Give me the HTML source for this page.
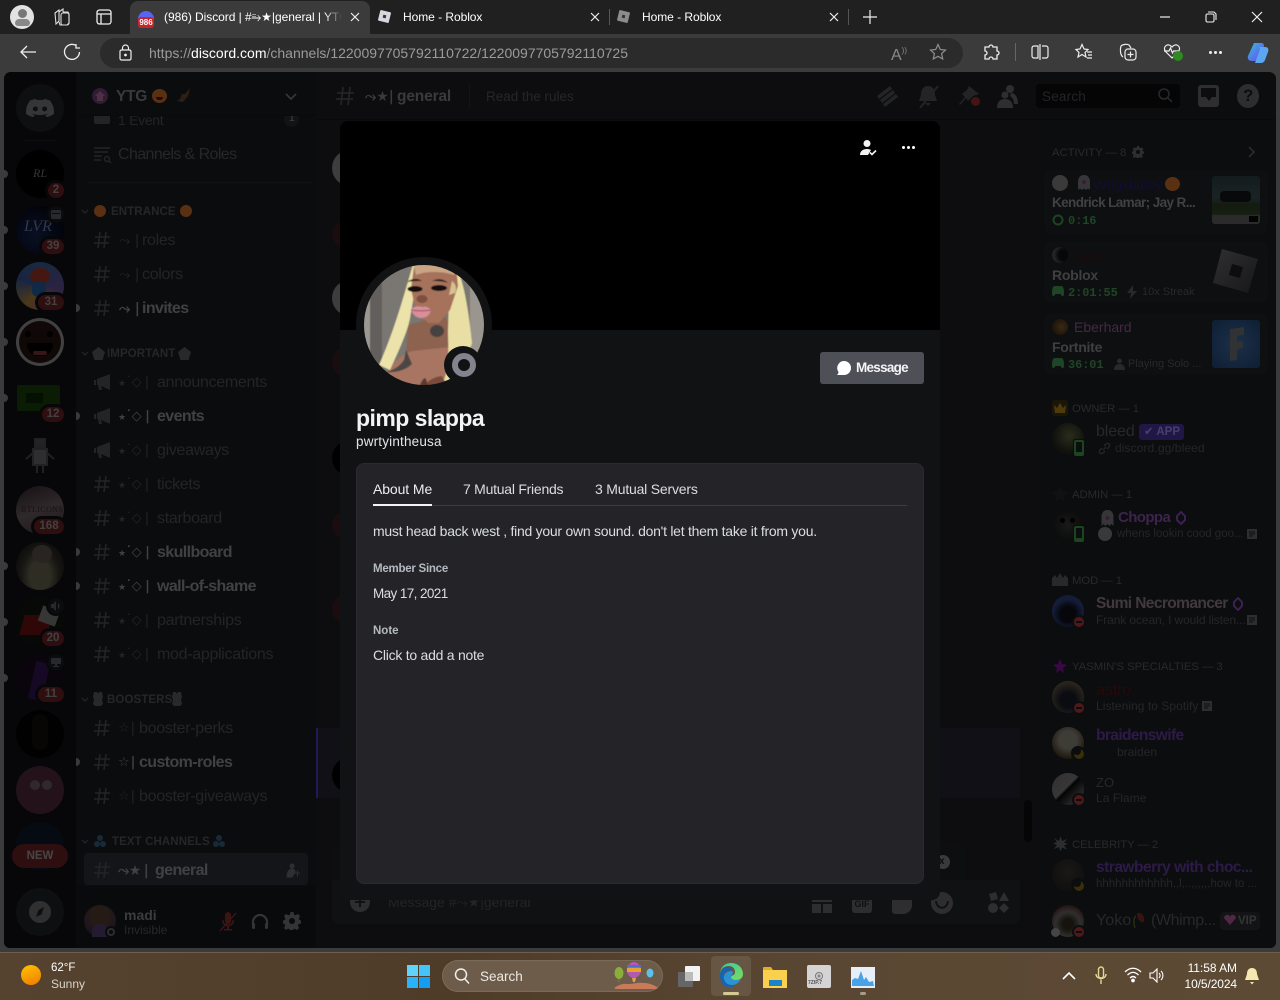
<!DOCTYPE html>
<html><head><meta charset="utf-8"><title>Discord</title>
<style>
html,body{margin:0;padding:0;width:1280px;height:1000px;overflow:hidden;background:#3b3b3b;font-family:"Liberation Sans","DejaVu Sans",sans-serif}
div,span,svg{position:absolute}
span.i{position:static}
.t{white-space:nowrap;line-height:20px;margin-top:-10px;height:20px}
.ch{font-size:16px;color:#37383b;letter-spacing:-.3px;margin-top:-8px}
.u{color:#636467;font-weight:bold;letter-spacing:-.6px}
.pre{font-family:"DejaVu Sans",sans-serif;font-size:13px;color:#37383b;letter-spacing:-.5px;margin-top:-8px}
.cat{font-size:11.5px;font-weight:bold;color:#3a3b3e;letter-spacing:.1px;margin-top:-8px}
.mem{font-size:16px;color:#3d3e41;letter-spacing:-.1px;margin-top:-8px}
.sub{font-size:12px;color:#3a3b3e}
.head{font-size:11.3px;color:#3f4043;letter-spacing:-.02px;margin-top:-8px}
.c{border-radius:50%}
.b{background:#7a2628;color:#a9a9ab;font-size:11.5px;font-weight:bold;border-radius:8px;height:15px;line-height:15px;text-align:center;box-shadow:0 0 0 3px #141418}
.dot{width:4px;height:8px;left:4px;background:#5a5a5c;border-radius:0 4px 4px 0}
.dot2{width:4px;height:8px;left:76px;background:#5a5a5c;border-radius:0 4px 4px 0}
.dnd{width:10px;height:10px;background:#7a2628;border-radius:50%;box-shadow:0 0 0 2px #131417}
.dnd:after{content:"";position:absolute;left:2px;top:4px;width:6px;height:2px;background:#131417}
.tb{color:#fff;font-size:12px}
.mono{font-family:'Liberation Mono',monospace;font-size:12px;font-weight:bold;color:#2e6b3a;letter-spacing:-.1px;margin-top:-9px}
.dim{left:1052px;width:32px;height:32px;border-radius:50%;background:rgba(0,0,0,.3)}
</style></head>
<body>
<!-- browser chrome -->
<div style="left:0;top:0;width:1280px;height:34px;background:#202020"></div>
<div style="left:0;top:34px;width:1280px;height:38px;background:#3b3b3b"></div>
<div style="left:130px;top:1px;width:240px;height:33px;background:#3b3b3b;border-radius:8px 8px 0 0"></div>
<div class="c" style="left:10px;top:5px;width:24px;height:24px;background:#e2e2e2"></div>
<div class="c" style="left:18px;top:9px;width:9px;height:9px;background:#777"></div>
<div style="left:15px;top:19px;width:15px;height:7px;background:#888;border-radius:7px 7px 5px 5px"></div>
<svg style="left:53px;top:8px" width="18" height="18" fill="none" stroke="#ddd" stroke-width="1.1"><path d="M2 5 6 2v11l-3 3zM6 4l4-3 0 3M10 4h5l1 2v9l-2 2H7l-1-3"/><rect x="8" y="5" width="8" height="12" rx="2"/></svg>
<svg style="left:96px;top:9px" width="16" height="16" fill="none" stroke="#eee" stroke-width="1.3"><rect x="1" y="1" width="14" height="14" rx="2.5"/><path d="M1 5h14M5 5v10"/></svg>
<div class="c" style="left:138px;top:11px;width:16px;height:16px;background:#5865f2"></div>
<div style="left:138px;top:17px;width:16px;height:11px;background:#c8242b;border-radius:3px;color:#fff;font-size:8px;font-weight:bold;line-height:12px;text-align:center">986</div>
<div class="t tb" style="left:164px;top:17px;width:178px;overflow:hidden;letter-spacing:-.05px;-webkit-mask-image:linear-gradient(90deg,#000 90%,transparent)">(986) Discord | #⥱★|general | YTG</div>
<svg style="left:350px;top:12px" width="10" height="10" stroke="#eee" stroke-width="1.2"><path d="M1 1l8 8M9 1 1 9"/></svg>
<div style="left:379px;top:11px;width:11px;height:11px;background:#d6d8de;transform:rotate(14deg);border-radius:1px"></div><div style="left:383px;top:15px;width:3px;height:3px;background:#333;transform:rotate(14deg)"></div>
<div class="t tb" style="left:403px;top:17px;letter-spacing:-.05px">Home - Roblox</div>
<svg style="left:590px;top:12px" width="10" height="10" stroke="#eee" stroke-width="1.2"><path d="M1 1l8 8M9 1 1 9"/></svg>
<div style="left:609px;top:9px;width:1px;height:16px;background:#555"></div>
<div style="left:618px;top:11px;width:11px;height:11px;background:#8a8c90;transform:rotate(14deg);border-radius:1px"></div><div style="left:622px;top:15px;width:3px;height:3px;background:#333;transform:rotate(14deg)"></div>
<div class="t tb" style="left:642px;top:17px;letter-spacing:-.05px">Home - Roblox</div>
<svg style="left:829px;top:12px" width="10" height="10" stroke="#eee" stroke-width="1.2"><path d="M1 1l8 8M9 1 1 9"/></svg>
<div style="left:848px;top:9px;width:1px;height:16px;background:#555"></div>
<svg style="left:863px;top:10px" width="14" height="14" stroke="#eee" stroke-width="1.2"><path d="M7 0v14M0 7h14"/></svg>
<svg style="left:1159px;top:12px" width="12" height="10" stroke="#eee" stroke-width="1.2"><path d="M1 5h10"/></svg>
<svg style="left:1205px;top:11px" width="12" height="12" fill="none" stroke="#eee" stroke-width="1.1"><rect x="1" y="3" width="8" height="8" rx="1.5"/><path d="M3 1h6l2 2v6"/></svg>
<svg style="left:1251px;top:11px" width="12" height="12" stroke="#eee" stroke-width="1.2"><path d="M1 1l10 10M11 1 1 11"/></svg>

<div style="left:100px;top:38px;width:863px;height:30px;background:#2b2b2b;border-radius:15px"></div>
<svg style="left:19px;top:44px" width="18" height="16" fill="none" stroke="#eee" stroke-width="1.3"><path d="M17 8H2M8 2 2 8l6 6"/></svg>
<svg style="left:63px;top:43px" width="18" height="18" fill="none" stroke="#eee" stroke-width="1.3"><path d="M13 2.5A7.5 7.5 0 1 0 16.5 9M13 1v4h4"/></svg>
<svg style="left:119px;top:44px" width="13" height="17" fill="none" stroke="#eee" stroke-width="1.2"><rect x="1" y="6" width="11" height="10" rx="1.5"/><path d="M3.5 6V4a3 3 0 0 1 6 0v2"/><circle cx="6.5" cy="11" r=".8" fill="#eee"/></svg>
<div class="t" style="left:149px;top:53px;font-size:14px;color:#9b9b9b">https://<span class="i" style="color:#fff">discord.com</span>/channels/1220097705792110722/1220097705792110725</div>
<div class="t" style="left:891px;top:51px;font-size:16px;color:#8a8a8a">A<span class="i" style="font-size:8px;vertical-align:7px">))</span></div>
<svg style="left:929px;top:43px" width="18" height="18" fill="none" stroke="#8f8f8f" stroke-width="1.2"><path d="M9 1.5l2.3 5 5.2.6-3.9 3.5 1.1 5.4L9 13.3 4.3 16l1.1-5.4-3.9-3.5 5.2-.6z"/></svg>
<svg style="left:983px;top:44px" width="17" height="17" fill="none" stroke="#eee" stroke-width="1.3"><path d="M6 3a2 2 0 0 1 4 0h4v4a2 2 0 0 1 0 4v4h-4a2 2 0 0 0-4 0H2v-4a2 2 0 0 0 0-4V3z"/></svg>
<div style="left:1015px;top:43px;width:1px;height:18px;background:#666"></div>
<svg style="left:1031px;top:44px" width="18" height="16" fill="none" stroke="#eee" stroke-width="1.2"><path d="M7 2H3a2 2 0 0 0-2 2v8a2 2 0 0 0 2 2h4zM9 0v16M11 2h4a2 2 0 0 1 2 2v8a2 2 0 0 1-2 2h-4"/></svg>
<svg style="left:1075px;top:43px" width="18" height="18" fill="none" stroke="#eee" stroke-width="1.2"><path d="M7 1.5 9 6l4 .5-3 3 1 4.5-4-2.5-4 2.5 1-4.5-3-3L5 6zM12 9h5M13 12h4M12 15h5"/></svg>
<svg style="left:1119px;top:43px" width="18" height="18" fill="none" stroke="#eee" stroke-width="1.2"><path d="M4 14C1 12 1 6 2 3c2-2 6-2 8-1l2 3"/><rect x="6" y="6" width="11" height="11" rx="3"/><path d="M11.5 8.5v6M8.5 11.5h6"/></svg>
<svg style="left:1163px;top:43px" width="18" height="16" fill="none" stroke="#eee" stroke-width="1.2"><path d="M9 15 2.5 8.5C-1 4 5 -1 9 4c4-5 10 0 6.5 4.5zM1 8h5l1.5-3 2 5 1-2h6"/></svg>
<div class="c" style="left:1173px;top:51px;width:10px;height:10px;background:#2f8a1f"></div>
<div class="c" style="left:1209px;top:51px;width:3px;height:3px;background:#eee"></div><div class="c" style="left:1214px;top:51px;width:3px;height:3px;background:#eee"></div><div class="c" style="left:1219px;top:51px;width:3px;height:3px;background:#eee"></div>
<svg style="left:1246px;top:41px" width="24" height="24"><defs><linearGradient id="cp" x1="0" y1="0" x2="1" y2="1"><stop offset="0" stop-color="#38c5c8"/><stop offset=".5" stop-color="#4f80ea"/><stop offset="1" stop-color="#7b3ff0"/></linearGradient></defs><path d="M8 2h7c2 0 3 1 3 3l-5 15H6c-3 0-5-2-4-5z" fill="url(#cp)"/><path d="M13 6h6c3 0 4 2 3 5l-3 8c-1 2-2 3-5 3H9l5-14z" fill="#5ba6f0"/></svg>

<!-- discord window -->
<div style="left:4px;top:72px;width:1272px;height:876px;background:#14151a;border-radius:7px 7px 6px 6px;overflow:hidden">
<div style="left:0;top:0;width:72px;height:876px;background:#141418"></div>
<div style="left:72px;top:0;width:240px;height:876px;background:#121316"></div>
<div style="left:1032px;top:0;width:240px;height:876px;background:#131417"></div>
<div style="left:72px;top:814px;width:240px;height:62px;background:#0f1012"></div>
<div style="left:80px;top:781px;width:224px;height:32px;background:#202125;border-radius:4px"></div>
<div style="left:84px;top:110px;width:224px;height:1px;background:#1b1c1f"></div>
<!-- highlighted msg -->
<div style="left:312px;top:656px;width:704px;height:70px;background:#1a1a22"></div>
<div style="left:312px;top:656px;width:2px;height:70px;background:#33268a"></div>
<!-- scrollbar -->
<div style="left:1020px;top:728px;width:8px;height:42px;background:#08080a;border-radius:4px"></div>
<!-- reply bar and chat input -->
<div style="left:328px;top:771px;width:634px;height:37px;background:#15161a;border-radius:8px 8px 0 0"></div>
<div style="left:328px;top:808px;width:688px;height:44px;background:#1a1b1e;border-radius:0 0 8px 8px"></div>
</div>
<!-- peeking chat avatars -->
<div class="c" style="left:332px;top:150px;width:36px;height:36px;background:#5e5e60"></div>
<div class="c" style="left:332px;top:219px;width:36px;height:30px;background:#2a1315"></div>
<div class="c" style="left:332px;top:280px;width:36px;height:36px;background:#5e5e60"></div>
<div class="c" style="left:332px;top:346px;width:36px;height:32px;background:#2a1315"></div>
<div class="c" style="left:332px;top:440px;width:36px;height:36px;background:#000"></div>
<div class="c" style="left:332px;top:510px;width:36px;height:30px;background:#2a1315"></div>
<div class="c" style="left:332px;top:593px;width:36px;height:32px;background:#2a1315"></div>
<div class="c" style="left:332px;top:757px;width:36px;height:36px;background:#000"></div>
<div class="c" style="left:936px;top:855px;width:14px;height:14px;background:#5a5a5c"></div>
<div class="t" style="left:939px;top:862px;font-size:10px;color:#111;font-weight:bold">x</div>

<!-- rail -->
<div class="c" style="left:16px;top:84px;width:48px;height:48px;background:#26272a"></div>
<svg style="left:26px;top:96px" width="28" height="24" viewBox="0 0 24 24" preserveAspectRatio="none"><path fill="#8c8c8f" d="M20.317 4.37a19.791 19.791 0 0 0-4.885-1.515.074.074 0 0 0-.079.037c-.21.375-.444.864-.608 1.25a18.27 18.27 0 0 0-5.487 0 12.64 12.64 0 0 0-.617-1.25.077.077 0 0 0-.079-.037A19.736 19.736 0 0 0 3.677 4.37a.07.07 0 0 0-.032.027C.533 9.046-.32 13.58.099 18.057a.082.082 0 0 0 .031.057 19.9 19.9 0 0 0 5.993 3.03.078.078 0 0 0 .084-.028c.462-.63.874-1.295 1.226-1.994a.076.076 0 0 0-.041-.106 13.107 13.107 0 0 1-1.872-.892.077.077 0 0 1-.008-.128 10.2 10.2 0 0 0 .372-.292.074.074 0 0 1 .077-.01c3.928 1.793 8.18 1.793 12.062 0a.074.074 0 0 1 .078.01c.12.098.246.198.373.292a.077.077 0 0 1-.006.127 12.299 12.299 0 0 1-1.873.892.077.077 0 0 0-.041.107c.36.698.772 1.362 1.225 1.993a.076.076 0 0 0 .084.028 19.839 19.839 0 0 0 6.002-3.03.077.077 0 0 0 .032-.054c.5-5.177-.838-9.674-3.549-13.66a.061.061 0 0 0-.031-.03zM8.02 15.33c-1.183 0-2.157-1.085-2.157-2.419 0-1.333.956-2.419 2.157-2.419 1.21 0 2.176 1.096 2.157 2.42 0 1.333-.956 2.418-2.157 2.418zm7.975 0c-1.183 0-2.157-1.085-2.157-2.419 0-1.333.955-2.419 2.157-2.419 1.21 0 2.176 1.096 2.157 2.42 0 1.333-.946 2.418-2.157 2.418z"/></svg>
<div style="left:24px;top:140px;width:32px;height:1px;background:#26272a"></div>

<div class="c" style="left:16px;top:150px;width:48px;height:48px;background:#000"></div>
<div class="t" style="left:33px;top:173px;font-family:'Liberation Serif',serif;font-style:italic;font-size:12px;color:#8a8a8a">RL</div>
<div class="c" style="left:16px;top:206px;width:48px;height:48px;background:radial-gradient(circle at 40% 60%,#1c2c5e,#050a1c 75%)"></div>
<div class="t" style="left:24px;top:227px;font-family:'Liberation Serif',serif;font-style:italic;font-size:16px;color:#7d8cc0">LVR</div>
<div class="c" style="left:16px;top:262px;width:48px;height:48px;background:conic-gradient(#3d6aa5,#6a5aa8 25%,#a06aa0 40%,#c09040 60%,#4060a8 80%,#3d6aa5)"></div>
<div class="c" style="left:30px;top:268px;width:20px;height:16px;background:#b0402a"></div>
<div style="left:32px;top:281px;width:14px;height:16px;background:#2a6ab0;border-radius:6px"></div>
<div class="c" style="left:16px;top:318px;width:48px;height:48px;background:#a8a8a8"></div>
<div class="c" style="left:19px;top:321px;width:42px;height:42px;background:#2a1612"></div>
<div style="left:27px;top:343px;width:26px;height:13px;background:#000;border-radius:2px 2px 13px 13px"></div>
<div style="left:33px;top:351px;width:14px;height:4px;background:#8a3a3a;border-radius:3px"></div>
<div class="c" style="left:25px;top:331px;width:6px;height:6px;background:#000"></div><div class="c" style="left:47px;top:331px;width:6px;height:6px;background:#000"></div>
<div style="left:17px;top:385px;width:43px;height:26px;background:#1d4a0e;border-radius:2px"></div>
<div style="left:26px;top:393px;width:17px;height:10px;background:#0c2a06"></div>
<svg style="left:24px;top:433px" width="32" height="44" fill="none" stroke="#55565a" stroke-width="2"><rect x="11" y="6" width="10" height="8" fill="#5a5b5f"/><rect x="9" y="16" width="14" height="16" fill="#77787c"/><path d="M9 20 2 26M23 20l7 6M13 32v8M19 32v8"/></svg>
<div class="c" style="left:16px;top:486px;width:48px;height:48px;background:linear-gradient(160deg,#3a2a30,#7a6a6e 50%,#503a42)"></div>
<div class="t" style="left:21px;top:510px;font-family:'Liberation Serif',serif;font-size:8px;color:#3e2a30;letter-spacing:.4px">BTLICONS</div>
<div class="c" style="left:16px;top:542px;width:48px;height:48px;background:radial-gradient(ellipse at 50% 70%,#77765a 30%,#3e3a30 55%,#1a1c22 85%)"></div>
<div class="c" style="left:32px;top:545px;width:20px;height:18px;background:#6a5e56"></div>
<div class="c" style="left:16px;top:598px;width:48px;height:48px;background:#151a12"></div>
<div style="left:22px;top:615px;width:28px;height:20px;background:#7a1414;transform:skewX(-15deg)"></div><div style="left:40px;top:608px;width:18px;height:16px;background:#8a8a86;transform:rotate(20deg)"></div>
<div class="c" style="left:16px;top:654px;width:48px;height:48px;background:#1c1022"></div>
<div style="left:32px;top:662px;width:14px;height:38px;background:#3a1a62;transform:rotate(12deg)"></div>
<div class="c" style="left:16px;top:710px;width:48px;height:48px;background:#050404"></div>
<div style="left:32px;top:714px;width:16px;height:36px;background:#171110;border-radius:8px"></div>
<div class="c" style="left:16px;top:766px;width:48px;height:48px;background:#5c2f43"></div>
<div class="c" style="left:30px;top:780px;width:10px;height:10px;background:#7a6a72"></div><div class="c" style="left:42px;top:780px;width:10px;height:10px;background:#7a6a72"></div>
<div class="c" style="left:16px;top:822px;width:48px;height:48px;background:#101c33"></div>
<div style="left:12px;top:844px;width:56px;height:24px;background:#7a2628;border-radius:12px;color:#b4b4b6;font-size:11.5px;font-weight:bold;text-align:center;line-height:24px">NEW</div>
<div class="c" style="left:16px;top:888px;width:48px;height:48px;background:#26272a"></div>
<div class="c" style="left:29px;top:901px;width:22px;height:22px;background:#7c7c7f"></div>
<svg style="left:29px;top:901px" width="22" height="22"><path d="M15 6l-2.5 7.5L7 16l2.5-7z" fill="#26272a"/></svg>
<!-- badges -->
<div class="b" style="left:48px;top:183px;width:16px">2</div>
<div class="b" style="left:42px;top:239px;width:22px">39</div>
<div class="b" style="left:38px;top:295px;width:26px">31</div>
<div class="b" style="left:42px;top:407px;width:22px">12</div>
<div class="b" style="left:34px;top:519px;width:30px">168</div>
<div class="b" style="left:42px;top:631px;width:22px">20</div>
<div class="b" style="left:38px;top:687px;width:26px">11</div>
<div class="c" style="left:48px;top:206px;width:16px;height:16px;background:#1f2023;box-shadow:0 0 0 2px #141418"></div>
<svg style="left:50px;top:208px" width="12" height="12" fill="#6a6b6e"><rect x="1" y="2" width="10" height="9" rx="1.5"/><rect x="2" y="5" width="8" height="1" fill="#1f2023"/></svg>
<div class="c" style="left:48px;top:598px;width:16px;height:16px;background:#1f2023;box-shadow:0 0 0 2px #141418"></div>
<svg style="left:50px;top:600px" width="12" height="12" fill="#6a6b6e"><path d="M1 4h2l3-3v10L3 8H1zM8 3c2 1 2 5 0 6z"/></svg>
<div class="c" style="left:48px;top:654px;width:16px;height:16px;background:#1f2023;box-shadow:0 0 0 2px #141418"></div>
<svg style="left:50px;top:656px" width="12" height="12" fill="#6a6b6e"><rect x="1" y="2" width="10" height="6" rx="1"/><rect x="5" y="8" width="2" height="2"/><rect x="3" y="10" width="6" height="1"/></svg>
<!-- rail dimming -->
<div style="left:4px;top:72px;width:72px;height:876px;background:rgba(0,0,0,.4);border-radius:7px 0 0 6px"></div>
<!-- dots -->
<div class="dot" style="top:170px"></div><div class="dot" style="top:226px"></div><div class="dot" style="top:282px"></div><div class="dot" style="top:338px"></div><div class="dot" style="top:394px"></div><div class="dot" style="top:562px"></div><div class="dot" style="top:618px"></div><div class="dot" style="top:674px"></div>

<!-- sidebar clipped event row -->
<svg style="left:94px;top:112px" width="16" height="13" fill="#37383b"><path d="M0 0h16v10a2 2 0 0 1-2 2H2a2 2 0 0 1-2-2z"/></svg>
<div class="t ch" style="left:118px;top:118px;font-size:14px">1 Event</div>
<div class="c" style="left:284px;top:112px;width:15px;height:15px;background:#1e1e20"></div>
<div class="t" style="left:289px;top:119px;font-size:10px;color:#555;font-weight:bold">1</div>
<div style="left:76px;top:72px;width:240px;height:43px;background:#121316"></div>
<div style="left:76px;top:115px;width:240px;height:1px;background:#0f1012"></div>
<div style="left:316px;top:119px;width:960px;height:1px;background:#0f1013"></div>
<!-- sidebar -->
<div class="c" style="left:92px;top:88px;width:16px;height:16px;background:#4b2c50"></div>
<svg style="left:95px;top:91px" width="10" height="10" fill="#7a4a68"><path d="M5 0 10 5H8v5H2V5H0z"/></svg>
<div class="t" style="left:116px;top:97px;font-size:15.5px;font-weight:bold;color:#5a5a5c;letter-spacing:-.3px">YTG</div>
<div class="c" style="left:152px;top:89px;width:15px;height:14px;background:#8b4a1c"></div>
<div style="left:156px;top:97px;width:7px;height:3px;background:#2a1508;border-radius:0 0 4px 4px"></div>
<svg style="left:176px;top:88px" width="15" height="15" fill="#46301f"><path d="M14 0 12 8l-5 6-6-1 3-2 2-5 3 0z"/></svg>
<svg style="left:285px;top:93px" width="12" height="7" fill="none" stroke="#525355" stroke-width="1.8"><path d="M1 1l5 5 5-5"/></svg>
<svg style="left:94px;top:146px" width="18" height="18" fill="none" stroke="#37383b" stroke-width="1.4"><path d="M0 2h16M0 6h14M0 10h8M0 14h7"/><circle cx="13" cy="13" r="2.5"/><path d="M15 15l2 2"/></svg>
<div class="t ch" style="left:118px;top:153px;color:#3c3d40;letter-spacing:-.6px">Channels &amp; Roles</div>

<svg style="left:81px;top:209px" width="8" height="6" fill="none" stroke="#3a3b3e" stroke-width="1.2"><path d="M1 1l3 3 3-3"/></svg>
<div class="c" style="left:94px;top:205px;width:12px;height:12px;background:#8b4a1c"></div>
<div class="t cat" style="left:111px;top:210px">ENTRANCE</div>
<div class="c" style="left:180px;top:205px;width:12px;height:12px;background:#8b4a1c"></div>

<svg style="left:81px;top:351px" width="8" height="6" fill="none" stroke="#3a3b3e" stroke-width="1.2"><path d="M1 1l3 3 3-3"/></svg>
<svg style="left:92px;top:347px" width="13" height="13" fill="#3e3f42"><path d="M6.5 0 13 5l-2.5 8h-8L0 5z"/></svg>
<div class="t cat" style="left:107px;top:352px">IMPORTANT</div>
<svg style="left:178px;top:347px" width="13" height="13" fill="#3e3f42"><path d="M6.5 0 13 5l-2.5 8h-8L0 5z"/></svg>

<svg style="left:81px;top:697px" width="8" height="6" fill="none" stroke="#3a3b3e" stroke-width="1.2"><path d="M1 1l3 3 3-3"/></svg>
<svg style="left:93px;top:692px" width="10" height="14" fill="#3e3f42"><path d="M1 0h3l1 2 1-2h3l1 5-1 3 1 4-2 2H2L0 12l1-4-1-3z"/></svg>
<div class="t cat" style="left:107px;top:698px">BOOSTERS</div>
<svg style="left:172px;top:692px" width="10" height="14" fill="#3e3f42"><path d="M1 0h3l1 2 1-2h3l1 5-1 3 1 4-2 2H2L0 12l1-4-1-3z"/></svg>

<svg style="left:81px;top:839px" width="8" height="6" fill="none" stroke="#3a3b3e" stroke-width="1.2"><path d="M1 1l3 3 3-3"/></svg>
<svg style="left:94px;top:835px" width="12" height="12" fill="#23415a"><circle cx="6" cy="3" r="3"/><circle cx="3" cy="9" r="3"/><circle cx="9" cy="9" r="3"/></svg>
<div class="t cat" style="left:112px;top:840px">TEXT CHANNELS</div>
<svg style="left:213px;top:835px" width="12" height="12" fill="#23415a"><circle cx="6" cy="3" r="3"/><circle cx="3" cy="9" r="3"/><circle cx="9" cy="9" r="3"/></svg>

<!-- channels -->
<svg style="left:94px;top:232px" width="16" height="16" fill="none" stroke="#37383b" stroke-width="1.5"><path d="M1 5h15M0 11h15M6 0 4 16M12 0l-2 16"/></svg>
<div class="t pre" style="left:119px;top:239px;font-size:14px">⤳<span class="i" style="margin-left:5px">|</span></div><div class="t ch" style="left:142px;top:239px">roles</div>
<svg style="left:94px;top:266px" width="16" height="16" fill="none" stroke="#37383b" stroke-width="1.5"><path d="M1 5h15M0 11h15M6 0 4 16M12 0l-2 16"/></svg>
<div class="t pre" style="left:119px;top:273px;font-size:14px">⤳<span class="i" style="margin-left:5px">|</span></div><div class="t ch" style="left:142px;top:273px">colors</div>
<svg style="left:94px;top:300px" width="16" height="16" fill="none" stroke="#37383b" stroke-width="1.5"><path d="M1 5h15M0 11h15M6 0 4 16M12 0l-2 16"/></svg>
<div class="t pre u" style="left:119px;top:307px;font-size:14px;color:#636467">⤳<span class="i" style="margin-left:5px">|</span></div><div class="t ch u" style="left:142px;top:307px">invites</div>
<div class="dot2" style="top:304px"></div>

<svg style="left:94px;top:374px" width="16" height="16" fill="#37383b"><path d="M0 6h2v5H0zM3 5l13-5v16L7 12l1 4H5l-1-5H3z"/></svg>
<div class="t pre" style="left:118px;top:381px"><span class="i" style="font-size:9px">★</span>˙◇ |</div><div class="t ch" style="left:157px;top:381px">announcements</div>
<svg style="left:94px;top:408px" width="16" height="16" fill="#37383b"><path d="M0 6h2v5H0zM3 5l13-5v16L7 12l1 4H5l-1-5H3z"/></svg>
<div class="t pre u" style="left:118px;top:415px;color:#636467"><span class="i" style="font-size:9px">★</span>˙◇ |</div><div class="t ch u" style="left:157px;top:415px">events</div>
<div class="dot2" style="top:412px"></div>
<svg style="left:94px;top:442px" width="16" height="16" fill="#37383b"><path d="M0 6h2v5H0zM3 5l13-5v16L7 12l1 4H5l-1-5H3z"/></svg>
<div class="t pre" style="left:118px;top:449px"><span class="i" style="font-size:9px">★</span>˙◇ |</div><div class="t ch" style="left:157px;top:449px">giveaways</div>
<svg style="left:94px;top:476px" width="16" height="16" fill="none" stroke="#37383b" stroke-width="1.5"><path d="M1 5h15M0 11h15M6 0 4 16M12 0l-2 16"/></svg>
<div class="t pre" style="left:118px;top:483px"><span class="i" style="font-size:9px">★</span>˙◇ |</div><div class="t ch" style="left:157px;top:483px">tickets</div>
<svg style="left:94px;top:510px" width="16" height="16" fill="none" stroke="#37383b" stroke-width="1.5"><path d="M1 5h15M0 11h15M6 0 4 16M12 0l-2 16"/></svg>
<div class="t pre" style="left:118px;top:517px"><span class="i" style="font-size:9px">★</span>˙◇ |</div><div class="t ch" style="left:157px;top:517px">starboard</div>
<svg style="left:94px;top:544px" width="16" height="16" fill="none" stroke="#37383b" stroke-width="1.5"><path d="M1 5h15M0 11h15M6 0 4 16M12 0l-2 16"/></svg>
<div class="t pre u" style="left:118px;top:551px;color:#636467"><span class="i" style="font-size:9px">★</span>˙◇ |</div><div class="t ch u" style="left:157px;top:551px">skullboard</div>
<div class="dot2" style="top:548px"></div>
<svg style="left:94px;top:578px" width="16" height="16" fill="none" stroke="#37383b" stroke-width="1.5"><path d="M1 5h15M0 11h15M6 0 4 16M12 0l-2 16"/></svg>
<div class="t pre u" style="left:118px;top:585px;color:#636467"><span class="i" style="font-size:9px">★</span>˙◇ |</div><div class="t ch u" style="left:157px;top:585px">wall-of-shame</div>
<div class="dot2" style="top:582px"></div>
<svg style="left:94px;top:612px" width="16" height="16" fill="none" stroke="#37383b" stroke-width="1.5"><path d="M1 5h15M0 11h15M6 0 4 16M12 0l-2 16"/></svg>
<div class="t pre" style="left:118px;top:619px"><span class="i" style="font-size:9px">★</span>˙◇ |</div><div class="t ch" style="left:157px;top:619px">partnerships</div>
<svg style="left:94px;top:646px" width="16" height="16" fill="none" stroke="#37383b" stroke-width="1.5"><path d="M1 5h15M0 11h15M6 0 4 16M12 0l-2 16"/></svg>
<div class="t pre" style="left:118px;top:653px"><span class="i" style="font-size:9px">★</span>˙◇ |</div><div class="t ch" style="left:157px;top:653px">mod-applications</div>

<svg style="left:94px;top:720px" width="16" height="16" fill="none" stroke="#37383b" stroke-width="1.5"><path d="M1 5h15M0 11h15M6 0 4 16M12 0l-2 16"/></svg>
<div class="t pre" style="left:118px;top:727px;letter-spacing:1px">☆|</div><div class="t ch" style="left:139px;top:727px">booster-perks</div>
<svg style="left:94px;top:754px" width="16" height="16" fill="none" stroke="#37383b" stroke-width="1.5"><path d="M1 5h15M0 11h15M6 0 4 16M12 0l-2 16"/></svg>
<div class="t pre u" style="left:118px;top:761px;letter-spacing:1px;color:#636467">☆|</div><div class="t ch u" style="left:139px;top:761px">custom-roles</div>
<div class="dot2" style="top:758px"></div>
<svg style="left:94px;top:788px" width="16" height="16" fill="none" stroke="#37383b" stroke-width="1.5"><path d="M1 5h15M0 11h15M6 0 4 16M12 0l-2 16"/></svg>
<div class="t pre" style="left:118px;top:795px;letter-spacing:1px">☆|</div><div class="t ch" style="left:139px;top:795px">booster-giveaways</div>
<svg style="left:94px;top:862px" width="16" height="16" fill="none" stroke="#37383b" stroke-width="1.5"><path d="M1 5h15M0 11h15M6 0 4 16M12 0l-2 16"/></svg>
<div class="t pre u" style="left:118px;top:869px;font-size:14px;color:#636467">⤳★<span class="i" style="margin-left:3px">|</span></div><div class="t ch u" style="left:155px;top:869px">general</div>
<svg style="left:285px;top:863px" width="15" height="15" fill="#48494c"><circle cx="7" cy="3" r="2.5"/><path d="M2 14c0-5 2-8 5-8 2 0 3 1 3 3l-3 5zM10 10h5M12.5 7.5v6" stroke="#48494c"/></svg>

<!-- user panel -->
<div class="c" style="left:84px;top:905px;width:32px;height:32px;background:radial-gradient(circle at 50% 35%,#3b2a20 30%,#2e2230 60%,#141410)"></div>
<div style="left:92px;top:924px;width:16px;height:13px;background:#3a2a4c;border-radius:8px 8px 0 0"></div>
<div class="c" style="left:105px;top:926px;width:12px;height:12px;background:#0f1012"></div>
<div class="c" style="left:107px;top:928px;width:8px;height:8px;background:#0f1012;border:2px solid #44454a;box-sizing:border-box"></div>
<div class="t" style="left:124px;top:915px;font-size:14px;font-weight:bold;color:#5c5c5e">madi</div>
<div class="t" style="left:124px;top:930px;font-size:12px;color:#3c3d40">Invisible</div>
<svg style="left:219px;top:912px" width="18" height="20" fill="#5e1e20"><path d="M6 3a3 3 0 0 1 6 0v6a3 3 0 0 1-6 0zM3 8h1.5c0 6 9 6 9 0H15c0 4-2 6-5 6v3h3v1.5H5V17h3v-3c-3 0-5-2-5-6z"/><path d="M17 1 1 19" stroke="#5e1e20" stroke-width="1.5"/></svg>
<svg style="left:251px;top:913px" width="18" height="18" fill="none" stroke="#505154" stroke-width="2.2"><path d="M2 12V9a7 7 0 0 1 14 0v3"/><rect x="1" y="10" width="3" height="6" rx="1.5" fill="#505154" stroke="none"/><rect x="14" y="10" width="3" height="6" rx="1.5" fill="#505154" stroke="none"/></svg>
<svg style="left:283px;top:912px" width="18" height="18" viewBox="0 0 18 18" fill="#505154"><path fill-rule="evenodd" d="M7.5 0h3l.5 2.5 1.5.7L15 2l2 2-1.2 2.4.6 1.5L18 8.5v3l-2.5.6-.6 1.4L16 16l-2 2-2.5-1.3-1 .4-.5 1.9h-3l-.6-2-1.3-.4L3 18l-2-2 1.3-2.5-.5-1.3L0 11.5v-3l1.9-.6.5-1.4L1 4l2-2 2.5 1.2 1.4-.6zM9 6a3 3 0 1 0 0 6 3 3 0 0 0 0-6z"/></svg>

<!-- top header -->
<svg style="left:335px;top:86px" width="20" height="20" fill="none" stroke="#37383b" stroke-width="1.8"><path d="M2 7h17M1 13h17M8 1 6 19M15 1l-2 18"/></svg>
<div class="t" style="left:365px;top:97px;font-size:14px;font-weight:bold;color:#5a5a5c;font-family:'DejaVu Sans',sans-serif;letter-spacing:0">⤳★|</div><div class="t" style="left:397px;top:97px;font-size:15.5px;font-weight:bold;color:#5a5a5c;letter-spacing:-.15px">general</div>
<div style="left:469px;top:84px;width:1px;height:24px;background:#1e1f22"></div>
<div class="t" style="left:486px;top:97px;font-size:13.5px;color:#3a3b3e">Read the rules</div>
<svg style="left:876px;top:84px" width="24" height="24" fill="#37383b"><path d="M1 12 14 2l2 3L3 15zM4 16 17 6l2 3L6 19zM7 20 20 10l2 3L9 23z"/></svg>
<svg style="left:916px;top:84px" width="24" height="24" fill="#37383b"><path d="M12 2c5 0 7 4 7 9l2 6H3l2-6c0-5 2-9 7-9zM9 19h6l-3 3z"/><path d="M22 2 4 24" stroke="#37383b" stroke-width="2"/></svg>
<svg style="left:957px;top:84px" width="24" height="24" fill="#37383b"><path d="M12 2 22 10l-6 2-5 5-2-3-6 7-1-1 6-7-3-3 5-4z"/></svg>
<div class="c" style="left:971px;top:97px;width:9px;height:9px;background:#6b2022"></div>
<svg style="left:997px;top:84px" width="22" height="24" fill="#47484b"><circle cx="13" cy="5" r="4"/><circle cx="8" cy="11" r="3.5"/><path d="M0 24c0-6 3-9 8-9s8 3 8 9zM14 9c4 0 7 4 7 11h-4c0-4-2-7-4-8z"/></svg>
<div style="left:1036px;top:84px;width:144px;height:24px;background:#08080a;border-radius:4px"></div>
<div class="t" style="left:1042px;top:97px;font-size:13.5px;color:#37383b;letter-spacing:.2px">Search</div>
<svg style="left:1158px;top:88px" width="15" height="15" fill="none" stroke="#3e3f42" stroke-width="1.5"><circle cx="6" cy="6" r="5"/><path d="M10 10l4 4"/></svg>
<svg style="left:1198px;top:85px" width="21" height="22" viewBox="0 0 21 22"><path fill="#47484b" d="M3 0h15a3 3 0 0 1 3 3v16a3 3 0 0 1-3 3H3a3 3 0 0 1-3-3V3a3 3 0 0 1 3-3z"/><path fill="#14151a" d="M3 3h15v9h-4l-3 4-3-4H3z"/></svg>
<div class="c" style="left:1237px;top:84px;width:22px;height:24px;background:#47484b"></div>
<div class="t" style="left:1243px;top:96px;font-size:17px;font-weight:bold;color:#14151a">?</div>

<!-- chat input icons -->
<svg style="left:350px;top:892px" width="20" height="20" fill="#47484b"><circle cx="10" cy="10" r="10"/><path d="M9 5h2v4h4v2h-4v4H9v-4H5V9h4z" fill="#1a1b1e"/></svg>
<div class="t" style="left:388px;top:902px;font-size:14px;color:#37383b">Message #⤳★|general</div>
<svg style="left:812px;top:899px" width="20" height="14" fill="#47484b"><rect x="0" y="0" width="20" height="3"/><rect x="0" y="5" width="9" height="9"/><rect x="11" y="5" width="9" height="9"/></svg>
<div style="left:852px;top:899px;width:20px;height:14px;background:#47484b;border-radius:0 0 3px 3px;color:#1a1b1e;font-size:9px;font-weight:bold;text-align:center;line-height:10px">GIF</div>
<div style="left:892px;top:899px;width:20px;height:15px;background:#47484b;border-radius:0 0 9px 3px"></div>
<div class="c" style="left:931px;top:892px;width:22px;height:22px;background:#47484b"></div>
<svg style="left:935px;top:900px" width="14" height="10" fill="none" stroke="#1a1b1e" stroke-width="2"><path d="M1 1c1 9 11 9 12 0"/></svg>
<svg style="left:988px;top:892px" width="21" height="21" fill="#47484b"><path d="M1 2l7-2 2 7-7 2zM16 0l5 9H11zM5 11a5 5 0 1 1 0 10 5 5 0 0 1 0-10zM16 11l5 5-5 5-5-5z"/></svg>

<!-- members -->
<div class="t head" style="left:1052px;top:151px">ACTIVITY — 8</div>
<svg style="left:1132px;top:146px" width="12" height="12" viewBox="0 0 18 18" fill="#47484b"><path fill-rule="evenodd" d="M7.5 0h3l.5 2.5 1.5.7L15 2l2 2-1.2 2.4.6 1.5L18 8.5v3l-2.5.6-.6 1.4L16 16l-2 2-2.5-1.3-1 .4-.5 1.9h-3l-.6-2-1.3-.4L3 18l-2-2 1.3-2.5-.5-1.3L0 11.5v-3l1.9-.6.5-1.4L1 4l2-2 2.5 1.2 1.4-.6zM9 6a3 3 0 1 0 0 6 3 3 0 0 0 0-6z"/></svg>
<svg style="left:1248px;top:146px" width="8" height="12" fill="none" stroke="#47484b" stroke-width="1.5"><path d="M1 1l5 5-5 5"/></svg>
<div style="left:1044px;top:170px;width:224px;height:64px;background:#16171a;border-radius:8px"></div>
<div style="left:1044px;top:241px;width:224px;height:62px;background:#16171a;border-radius:8px"></div>
<div style="left:1044px;top:313px;width:224px;height:62px;background:#16171a;border-radius:8px"></div>
<div class="c" style="left:1052px;top:175px;width:16px;height:16px;background:#5a5a5a"></div>
<svg style="left:1077px;top:175px" width="14" height="16" fill="#545456"><path d="M7 0c4 0 6 3 6 7v8l-2-1.5-2 1.5-2-1.5L5 15l-2-1.5L1 15V7c0-4 2-7 6-7z"/><ellipse cx="7" cy="7" rx="2" ry="2" fill="#5a2a55"/></svg>
<div class="t" style="left:1093px;top:184px;font-size:14px;color:#20154a;letter-spacing:-.2px">yvngxbutby</div>
<div class="c" style="left:1165px;top:177px;width:15px;height:14px;background:#8b4a1c"></div>
<div class="t" style="left:1052px;top:203px;font-size:13.5px;font-weight:bold;color:#656567;letter-spacing:-.6px">Kendrick Lamar; Jay R...</div>
<svg style="left:1052px;top:213px" width="12" height="14" fill="none" stroke="#2c6a38" stroke-width="2"><circle cx="6" cy="7" r="4.5"/></svg>
<div class="t mono" style="left:1068px;top:220px">0:16</div>
<div style="left:1212px;top:176px;width:48px;height:48px;background:linear-gradient(180deg,#2c3d42 0,#3a5052 45%,#2c3c26 60%,#344628 80%,#5f5f60 82%);border-radius:3px"></div>
<div style="left:1220px;top:191px;width:31px;height:11px;background:#101518;border-radius:4px"></div>
<div style="left:1249px;top:216px;width:9px;height:6px;background:#0a0a0a"></div>
<div style="left:1212px;top:176px;width:48px;height:48px;background:rgba(0,0,0,.3);border-radius:3px"></div>
<div class="c" style="left:1052px;top:247px;width:16px;height:16px;background:#0c0c0e;box-shadow:inset 4px 0 3px #3c3c3e"></div>
<div class="t" style="left:1074px;top:256px;font-size:14px;color:#2c1212">kuni</div>
<div class="t" style="left:1052px;top:275px;font-size:14px;color:#616163;font-weight:bold;letter-spacing:-.25px">Roblox</div>
<svg style="left:1052px;top:286px" width="12" height="11" fill="#2e6b3a"><path d="M3 0h6c2 0 3 2 3 7 0 4-2 4-3.5 1h-5C2 11 0 11 0 7c0-5 1-7 3-7z"/></svg>
<div class="t mono" style="left:1068px;top:292px">2:01:55</div>
<svg style="left:1127px;top:285px" width="10" height="14" fill="#3e3f42"><path d="M6 0 0 8h4l-1 6 7-8H6z"/></svg>
<div class="t sub" style="left:1142px;top:292px;font-size:11px;color:#3e3f42">10x Streak</div>
<svg style="left:1212px;top:247px" width="48" height="48" viewBox="0 0 48 48"><defs><linearGradient id="rb" x1="0" y1="0" x2="1" y2="1"><stop offset="0" stop-color="#4a4a4c"/><stop offset="1" stop-color="#232427"/></linearGradient></defs><path d="M10 2 46 12 36 46 1 36z" fill="url(#rb)"/><path d="M20 17l11 3-3 11-11-3z" fill="#14151a"/></svg>
<div class="c" style="left:1052px;top:319px;width:16px;height:16px;background:radial-gradient(circle at 60% 50%,#5a4020,#1c1408)"></div>
<div class="t" style="left:1074px;top:327px;font-size:14px;color:#693f68">Eberhard</div>
<div class="t" style="left:1052px;top:347px;font-size:14px;color:#616163;font-weight:bold;letter-spacing:-.25px">Fortnite</div>
<svg style="left:1052px;top:358px" width="12" height="11" fill="#2e6b3a"><path d="M3 0h6c2 0 3 2 3 7 0 4-2 4-3.5 1h-5C2 11 0 11 0 7c0-5 1-7 3-7z"/></svg>
<div class="t mono" style="left:1068px;top:364px">36:01</div>
<svg style="left:1113px;top:358px" width="13" height="12" fill="#3e3f42"><circle cx="6.5" cy="3" r="2.5"/><path d="M1 12c0-4 2-6 5.5-6S12 8 12 12z"/></svg>
<div class="t sub" style="left:1128px;top:364px;font-size:11px;color:#3e3f42">Playing Solo ...</div>
<div style="left:1212px;top:320px;width:48px;height:48px;background:radial-gradient(circle,#2a4a72,#17304f);border-radius:3px"></div>
<svg style="left:1230px;top:327px" width="14" height="34" fill="#4c4d50"><path d="M0 2 14 0v8L7 9v6l6-1v7l-6 1v11L0 34z"/></svg>

<div style="left:1052px;top:400px;width:16px;height:16px;background:#2c2310;border-radius:3px"></div>
<svg style="left:1054px;top:403px" width="12" height="10" fill="#7a5a10"><path d="M0 2 3 5 6 0l3 5 3-3-1 8H1z"/></svg>
<div class="t head" style="left:1072px;top:407px">OWNER — 1</div>
<div class="c" style="left:1052px;top:423px;width:32px;height:32px;background:radial-gradient(circle at 55% 40%,#5e6440,#2a2a20 60%,#111)"></div>
<div class="dim" style="top:423px"></div>
<div class="t mem" style="left:1096px;top:430px">bleed</div>
<div style="left:1139px;top:424px;width:45px;height:16px;background:#33246e;border-radius:3px;color:#6e63a8;font-size:11.5px;font-weight:bold;line-height:16px;text-align:right;padding-right:4px;box-sizing:border-box">✔ APP</div>
<div class="t sub" style="left:1115px;top:448px;letter-spacing:.1px">discord.gg/bleed</div>
<svg style="left:1098px;top:442px" width="13" height="13" fill="none" stroke="#3a3b3e" stroke-width="1.4"><path d="M5 8l3-3M4 6 2 8a2 2 0 0 0 3 3l2-2M9 7l2-2a2 2 0 0 0-3-3L6 4"/></svg>
<div style="left:1073px;top:439px;width:12px;height:18px;background:#131417;border-radius:2px"></div>
<div style="left:1074px;top:440px;width:10px;height:16px;background:#2a6b33;border-radius:2px"></div><div style="left:1076px;top:442px;width:6px;height:10px;background:#131417"></div>

<svg style="left:1052px;top:486px" width="16" height="16" fill="#1b1b1f"><path d="M8 0 10 5l6 1-4 4 1 6-5-3-5 3 1-6-4-4 6-1z"/></svg>
<div class="t head" style="left:1072px;top:493px">ADMIN — 1</div>
<div class="c" style="left:1052px;top:509px;width:32px;height:32px;background:radial-gradient(circle,#38393a,#1c1c1c 70%,#3c3c3c)"></div>
<div class="c" style="left:1060px;top:518px;width:5px;height:5px;background:#000"></div><div class="c" style="left:1070px;top:518px;width:5px;height:5px;background:#000"></div>
<div class="dim" style="top:509px"></div>
<div style="left:1073px;top:525px;width:12px;height:18px;background:#131417;border-radius:2px"></div>
<div style="left:1074px;top:526px;width:10px;height:16px;background:#2a6b33;border-radius:2px"></div><div style="left:1076px;top:528px;width:6px;height:10px;background:#131417"></div>
<svg style="left:1100px;top:510px" width="15" height="17" fill="#545456"><path d="M7.5 0c4 0 6 3 6 7v9l-2-2-2 2-2-2-2 2-2-2-2 2V7c0-4 2-7 6-7z"/><ellipse cx="7.5" cy="8" rx="2" ry="2" fill="#5a2a55"/></svg>
<div class="t" style="left:1118px;top:518px;font-size:15px;font-weight:bold;color:#5c3876;letter-spacing:-.6px">Choppa</div>
<svg style="left:1176px;top:511px" width="10" height="14" fill="none" stroke="#5c3080" stroke-width="2"><path d="M5 1 9 5v4l-4 4-4-4V5z"/></svg>
<div class="c" style="left:1098px;top:527px;width:14px;height:14px;background:#585858"></div>
<div class="t sub" style="left:1117px;top:534px;font-size:11.5px">whens lookin cood goo...</div>
<svg style="left:1247px;top:529px" width="10" height="10" fill="#47484b"><path d="M0 0h10v10H0z"/><path d="M2 3h6M2 5h6M2 7h4" stroke="#131417"/></svg>

<svg style="left:1052px;top:573px" width="16" height="14" fill="#3e3f42"><path d="M0 13V5l3-3 2 3 3-5 3 5 2-3 3 3v8z"/></svg>
<div class="t head" style="left:1072px;top:579px">MOD — 1</div>
<div class="c" style="left:1052px;top:595px;width:32px;height:32px;background:radial-gradient(circle at 50% 60%,#0a0a12 30%,#1f2c55 60%)"></div>
<div class="dnd" style="left:1074px;top:617px"></div>
<div class="t" style="left:1096px;top:604px;font-size:15.5px;font-weight:bold;color:#655860;letter-spacing:-.6px">Sumi Necromancer</div>
<svg style="left:1233px;top:597px" width="10" height="14" fill="none" stroke="#5c3080" stroke-width="2"><path d="M5 1 9 5v4l-4 4-4-4V5z"/></svg>
<div class="t sub" style="left:1096px;top:620px;letter-spacing:-.1px">Frank ocean, I would listen...</div>
<svg style="left:1247px;top:615px" width="10" height="10" fill="#47484b"><path d="M0 0h10v10H0z"/><path d="M2 3h6M2 5h6M2 7h4" stroke="#131417"/></svg>

<svg style="left:1053px;top:659px" width="14" height="14" fill="#5a0e6a"><path d="M7 0 9 5l5 1-4 3 1 5-4-3-4 3 1-5-4-3 5-1z"/></svg>
<div class="t head" style="left:1072px;top:665px">YASMIN'S SPECIALTIES — 3</div>
<div class="c" style="left:1052px;top:681px;width:32px;height:32px;background:radial-gradient(circle at 50% 60%,#1b1a2a 30%,#5a5340 70%)"></div>
<div class="dim" style="top:681px"></div>
<div class="dnd" style="left:1074px;top:703px"></div>
<div class="t mem" style="left:1096px;top:689px;color:#3a1010">astro.</div>
<div class="t sub" style="left:1096px;top:706px;letter-spacing:.05px">Listening to Spotify</div>
<svg style="left:1202px;top:701px" width="10" height="10" fill="#47484b"><path d="M0 0h10v10H0z"/><path d="M2 3h6M2 5h6M2 7h4" stroke="#131417"/></svg>
<div class="c" style="left:1052px;top:727px;width:32px;height:32px;background:radial-gradient(circle at 50% 40%,#8a857a 35%,#3a2e14 80%)"></div>
<div class="dim" style="top:727px"></div>
<div class="c" style="left:1071px;top:746px;width:14px;height:14px;background:#131417"></div>
<div class="c" style="left:1074px;top:749px;width:10px;height:10px;background:#5a4a0c"></div><div class="c" style="left:1073px;top:747px;width:8px;height:8px;background:#131417"></div>
<div class="t" style="left:1096px;top:736px;font-size:15.5px;font-weight:bold;color:#46296f;letter-spacing:-.6px">braidenswife</div>
<div class="t sub" style="left:1117px;top:752px">braiden</div>
<div class="c" style="left:1052px;top:773px;width:32px;height:32px;background:linear-gradient(135deg,#6a6a6c 0,#7c7a7a 45%,#0a0a0a 50%,#6a6868 85%)"></div>
<div class="dim" style="top:773px"></div>
<div class="dnd" style="left:1074px;top:795px"></div>
<div class="t" style="left:1096px;top:783px;font-size:13px;color:#3d3e41">ZO</div>
<div class="t sub" style="left:1096px;top:798px;letter-spacing:.05px">La Flame</div>
<svg style="left:1053px;top:836px" width="15" height="15" fill="#47484b"><path d="M7.5 0 9 5l5-2-3 4 4 .5-4 2 3 4-5-2-1.5 4L6 11l-5 2 3-4-4-1.5L4 6 1 2l5 3z"/></svg>
<div class="t head" style="left:1072px;top:843px">CELEBRITY — 2</div>
<div class="c" style="left:1052px;top:859px;width:32px;height:32px;background:radial-gradient(circle at 50% 40%,#2a2622,#141414)"></div>
<div class="c" style="left:1071px;top:878px;width:14px;height:14px;background:#131417"></div>
<div class="c" style="left:1074px;top:881px;width:10px;height:10px;background:#5a4a0c"></div><div class="c" style="left:1073px;top:879px;width:8px;height:8px;background:#131417"></div>
<div class="t" style="left:1096px;top:868px;font-size:15.5px;font-weight:bold;color:#45296e;letter-spacing:-.5px">strawberry with choc...</div>
<div class="t sub" style="left:1096px;top:884px;font-size:11.5px">hhhhhhhhhhhh,,l,..,,,,,,how to ...</div>
<div class="c" style="left:1052px;top:905px;width:32px;height:32px;background:radial-gradient(circle at 50% 60%,#322a1c 20%,#6a6a68 50%,#4a1818 85%)"></div>
<div class="dim" style="top:905px"></div>
<div class="dnd" style="left:1074px;top:927px"></div>
<div class="c" style="left:1051px;top:928px;width:9px;height:9px;background:#6a6a6a"></div>
<div class="t mem" style="left:1096px;top:919px;letter-spacing:.1px">Yoko</div>
<svg style="left:1132px;top:912px" width="14" height="17" fill="none"><path d="M3 16C1 10 2 5 4 4" stroke="#354a1a" stroke-width="1.5"/><path d="M5 1c5-1 8 3 7 9-4 1-7-3-7-9z" fill="#5a1c1c"/></svg>
<div class="t mem" style="left:1151px;top:919px;letter-spacing:-.4px">(Whimp...</div>
<div style="left:1220px;top:912px;width:40px;height:18px;background:#1f1f24;border-radius:4px"></div>
<svg style="left:1224px;top:914px" width="12" height="11" fill="#7a4068"><path d="M6 11 0 4c0-3 5-5 6-1 1-4 6-2 6 1z"/></svg>
<div class="t" style="left:1238px;top:921px;font-size:11.5px;font-weight:bold;color:#515255">VIP</div>

<!-- dim overlay below the modal -->
<div style="left:4px;top:72px;width:1272px;height:876px;background:rgba(0,0,0,.35);border-radius:7px 7px 6px 6px"></div>

<!-- modal -->
<div style="left:340px;top:121px;width:600px;height:779px;background:#111214;border-radius:8px;overflow:hidden">
<div style="left:0;top:0;width:600px;height:209px;background:#000"></div>
</div>
<svg style="left:859px;top:139px" width="18" height="18" fill="#f2f3f5"><circle cx="8" cy="4.5" r="3.5"/><path d="M1 16c0-4 3-6 7-6 2 0 3 .5 4 1l-3 5z"/><path d="M11 13.5l2 2 4-4" stroke="#f2f3f5" fill="none" stroke-width="1.6"/></svg>
<div class="c" style="left:902px;top:146px;width:3px;height:3px;background:#fff"></div><div class="c" style="left:907px;top:146px;width:3px;height:3px;background:#fff"></div><div class="c" style="left:912px;top:146px;width:3px;height:3px;background:#fff"></div>
<div class="c" style="left:356px;top:257px;width:136px;height:136px;background:#111214"></div>
<svg style="left:364px;top:265px" width="120" height="120" viewBox="0 0 120 120"><defs><clipPath id="ac"><circle cx="60" cy="60" r="60"/></clipPath><filter id="bl" x="-5%" y="-5%" width="110%" height="110%"><feGaussianBlur stdDeviation=".6"/></filter></defs><g clip-path="url(#ac)"><g filter="url(#bl)"><rect x="-2" y="-2" width="124" height="124" fill="#7a7672"/><rect x="-2" y="-2" width="8" height="124" fill="#9b9791"/><rect x="6" y="-2" width="12" height="124" fill="#625f5c"/><rect x="106" y="-2" width="16" height="124" fill="#9a958e"/><path d="M40 122 44 60 80 50 92 70 105 122z" fill="#8d6250"/><path d="M18 122c4-18 14-30 30-36l38-4 16 40z" fill="#a87562"/><path d="M60 122c4-7 10-10 18-11 2 4 3 6 2 11z" fill="#7a4c3c"/><path d="M49 0C43 18 33 60 15 100l11 5c10-22 18-40 20-52L50 30 57-2z" fill="#ece3aa"/><path d="M92 0c9 20 13 50 16 78-6 18-14 30-22 40l-6-3c6-14 4-36 4-50l1-30z" fill="#e9dfa4"/><path d="M50 1h42l2 20-8 24-11 13H64L52 46 47 24z" fill="#a6725c"/><path d="M50 2C54-2 88-2 92 3L90 10C78 6 62 6 52 10z" fill="#c9a584"/><path d="M88 16c4 3 5 8 3 12l-6 2z" fill="#d5c28e"/><path d="M43 17c5-4 11-4 15-1-5 0-10 0-15 1zM68 16c6-3 12-2 16 2-5-2-11-2-16-2z" fill="#2c1a12"/><ellipse cx="51" cy="24" rx="7.5" ry="3" fill="#140d0b"/><ellipse cx="75" cy="23" rx="8" ry="3" fill="#140d0b"/><ellipse cx="58" cy="34" rx="5.5" ry="4" fill="#7e503f"/><path d="M47 44c3-3 8-3 11-2 3-1 7 0 9 3-1 5-5 8-10 8s-9-4-10-9z" fill="#d98f9a"/><path d="M47 45c6 1 14 1 20 0" stroke="#9a5060" fill="none"/><ellipse cx="73" cy="66" rx="7" ry="6" fill="#46423f"/><path d="M22 107c8-2 14-6 18-12l2-10 6 14c-6 6-16 9-26 8z" fill="#4b4644"/><path d="M56 120c2-5 4-7 5-7 1 0 2 4 3 9z" fill="#5a3a30"/></g></g></svg>
<div class="c" style="left:444px;top:346px;width:38px;height:38px;background:#111214"></div>
<div class="c" style="left:452px;top:353px;width:24px;height:24px;background:#82838c"></div>
<div class="c" style="left:458px;top:359px;width:12px;height:12px;background:#111214"></div>
<div style="left:820px;top:352px;width:104px;height:32px;background:#4e5058;border-radius:3px"></div>
<svg style="left:837px;top:361px" width="14" height="14" fill="#fff"><path d="M7 0a7 7 0 0 1 0 14H0c1-1 1.5-2 1.5-3A7 7 0 0 1 7 0z"/></svg>
<div class="t" style="left:856px;top:368px;font-size:13.5px;font-weight:bold;color:#f4f4f6;letter-spacing:-.73px">Message</div>
<div class="t" style="left:356px;top:418px;font-size:23px;font-weight:bold;color:#f2f3f5;letter-spacing:-.55px">pimp slappa</div>
<div class="t" style="left:356px;top:442px;font-size:13.5px;color:#e4e5e8;letter-spacing:.18px">pwrtyintheusa</div>
<div style="left:356px;top:463px;width:568px;height:421px;background:#232328;border-radius:8px;border:1px solid #2a2a2f;box-sizing:border-box"></div>
<div class="t" style="left:373px;top:489px;font-size:14px;color:#eeeef0;letter-spacing:-.1px">About Me</div>
<div class="t" style="left:463px;top:489px;font-size:14px;color:#dcdde0;letter-spacing:-.25px">7 Mutual Friends</div>
<div class="t" style="left:595px;top:489px;font-size:14px;color:#dcdde0;letter-spacing:-.2px">3 Mutual Servers</div>
<div style="left:373px;top:505px;width:534px;height:1px;background:#3b3b41"></div>
<div style="left:373px;top:504px;width:59px;height:2px;background:#f2f3f5"></div>
<div class="t" style="left:373px;top:531px;font-size:14px;color:#dbdee1;letter-spacing:-.26px">must head back west , find your own sound. don't let them take it from you.</div>
<div class="t" style="left:373px;top:569px;font-size:11.5px;font-weight:bold;color:#b5bac1;letter-spacing:-.25px">Member Since</div>
<div class="t" style="left:373px;top:594px;font-size:13.5px;color:#dbdee1;letter-spacing:-.6px">May 17, 2021</div>
<div class="t" style="left:373px;top:631px;font-size:11.5px;font-weight:bold;color:#b5bac1">Note</div>
<div class="t" style="left:373px;top:655px;font-size:14px;color:#dbdee1;letter-spacing:-.25px">Click to add a note</div>

<!-- taskbar -->
<div style="left:0;top:952px;width:1280px;height:48px;background:linear-gradient(90deg,#56432f,#4e3c29 35%,#5a4733 65%,#5d4a34)"></div>
<div style="left:0;top:952px;width:1280px;height:1px;background:#6e5e4c"></div>
<div class="c" style="left:21px;top:965px;width:20px;height:20px;background:linear-gradient(160deg,#ffc400,#ee7a00)"></div>
<div class="t tb" style="left:51px;top:968px;font-size:11.5px">62°F</div>
<div class="t tb" style="left:51px;top:984px;font-size:12px;color:#d8d4ce">Sunny</div>
<div style="left:407px;top:965px;width:11px;height:11px;background:#5fd3fb"></div><div style="left:419px;top:965px;width:11px;height:11px;background:#45c4fa"></div><div style="left:407px;top:977px;width:11px;height:11px;background:#29b3f8"></div><div style="left:419px;top:977px;width:11px;height:11px;background:#149df5"></div>
<div style="left:442px;top:960px;width:221px;height:32px;background:#6d5c49;border-radius:16px;box-shadow:inset 0 0 0 1px #7a6a58"></div>
<svg style="left:454px;top:967px" width="17" height="18" fill="none" stroke="#eee" stroke-width="1.5"><circle cx="7" cy="7.5" r="5.5"/><path d="M11 12l4 4.5"/></svg>
<div class="t tb" style="left:480px;top:977px;font-size:13.5px;color:#ede9e3">Search</div>
<svg style="left:612px;top:962px" width="48" height="30"><ellipse cx="7" cy="11" rx="4.5" ry="6" fill="#8aae3c"/><path d="M7 17v3" stroke="#777"/><ellipse cx="22" cy="8" rx="7" ry="8" fill="#b05ab0"/><path d="M15 6h14v4H15z" fill="#e8a030"/><path d="M15 3h14v2H15z" fill="#4a70d0"/><path d="M20 16h4l-1 4h-2z" fill="#e0a050"/><ellipse cx="38" cy="11" rx="3.5" ry="4.5" fill="#5cc0e8"/><path d="M2 26c8-5 10-4 14-4 6 0 10-2 16-1 6 0 12 3 14 5l-2 1H4z" fill="#c97a58"/></svg>
<svg style="left:677px;top:965px" width="24" height="22"><rect x="8" y="1" width="15" height="15" rx="1" fill="#f2f2f2"/><rect x="1" y="7" width="15" height="15" rx="1" fill="#666"/><rect x="8" y="7" width="8" height="9" fill="#bbb"/></svg>
<div style="left:711px;top:956px;width:40px;height:40px;background:#675643;border-radius:4px"></div>
<div style="left:723px;top:992px;width:16px;height:3px;background:#d4c994;border-radius:2px"></div>
<svg style="left:719px;top:962px" width="24" height="26"><defs><linearGradient id="eg" x1="0" y1="0" x2="1" y2="1"><stop offset="0" stop-color="#34c9a8"/><stop offset="1" stop-color="#7fdc5a"/></linearGradient></defs><path d="M1 13C1 5 6 1 12 1c7 0 12 5 12 11 0 4-3 6-7 6-3 0-5-1-5-3s4-1 4-5-3-6-6-6c-6 0-9 4-9 9z" fill="url(#eg)"/><path d="M1 13c0-5 4-8 8-8 3 0 4 2 4 4-6-2-10 3-8 8 1 4 6 8 12 6-3 2-5 2-7 2C5 25 1 20 1 13z" fill="#1565b0"/><path d="M5 17c-1-4 2-8 8-8 2 2 0 4-1 5-1 3 2 4 5 4 2 0 4 0 5-2-1 4-5 7-9 7-4 0-7-2-8-6z" fill="#2a93d8"/></svg>
<svg style="left:762px;top:965px" width="26" height="24"><path d="M1 3a1 1 0 0 1 1-1h7l2 3h-10z" fill="#e6ac22"/><path d="M1 5h24v18H1z" fill="#fbd04d"/><rect x="7" y="15" width="13" height="6" fill="#1a84c8"/></svg>
<div style="left:807px;top:965px;width:24px;height:23px;background:#d4d4d4;border-radius:2px"></div>
<svg style="left:812px;top:970px" width="14" height="12" fill="none" stroke="#777"><circle cx="7" cy="6" r="3.5"/><circle cx="7" cy="6" r="1"/></svg>
<div class="t" style="left:808px;top:983px;font-size:5px;color:#555;font-weight:bold">7ZIP.7</div>
<div style="left:851px;top:967px;width:24px;height:21px;background:#e6eef8"></div>
<svg style="left:852px;top:970px" width="22" height="16"><path d="M0 16V10l3-2 3 1 3-8 3 9 2-3 3 5 4-1 1 5z" fill="#48a2e8"/></svg>
<div style="left:860px;top:992px;width:6px;height:3px;background:#a59c90;border-radius:2px"></div>
<svg style="left:1062px;top:971px" width="14" height="9" fill="none" stroke="#fff" stroke-width="1.6"><path d="M1 8l6-6 6 6"/></svg>
<svg style="left:1095px;top:966px" width="12" height="19" fill="none" stroke="#e3d696" stroke-width="1.4"><rect x="3.5" y="1" width="5" height="11" rx="2.5"/><path d="M1 8c0 6 10 6 10 0M6 13.5V18"/></svg>
<svg style="left:1124px;top:967px" width="18" height="16" fill="none" stroke="#fff" stroke-width="1.3"><path d="M1 5c5-5 11-5 16 0M3.5 8c3.5-3.5 7.5-3.5 11 0M6 11c2-2 4-2 6 0"/><circle cx="9" cy="13.5" r="1.2" fill="#fff"/></svg>
<svg style="left:1149px;top:968px" width="16" height="15" fill="none" stroke="#fff" stroke-width="1.1"><path d="M1 5h3l4-4v13l-4-4H1zM10 5c1.5 1.5 1.5 3.5 0 5M12 3c2.5 2.5 2.5 6.5 0 9"/></svg>
<div class="t tb" style="left:1177px;top:968px;width:60px;text-align:right;letter-spacing:-.05px">11:58 AM</div>
<div class="t tb" style="left:1177px;top:984px;width:60px;text-align:right;letter-spacing:-.1px">10/5/2024</div>
<svg style="left:1245px;top:968px" width="14" height="17" fill="#f6e8b0"><path d="M7 0c3 0 5 2 5 6l2 6H0l2-6c0-4 2-6 5-6zM5 14h4l-2 2.500z"/></svg>
</body></html>
